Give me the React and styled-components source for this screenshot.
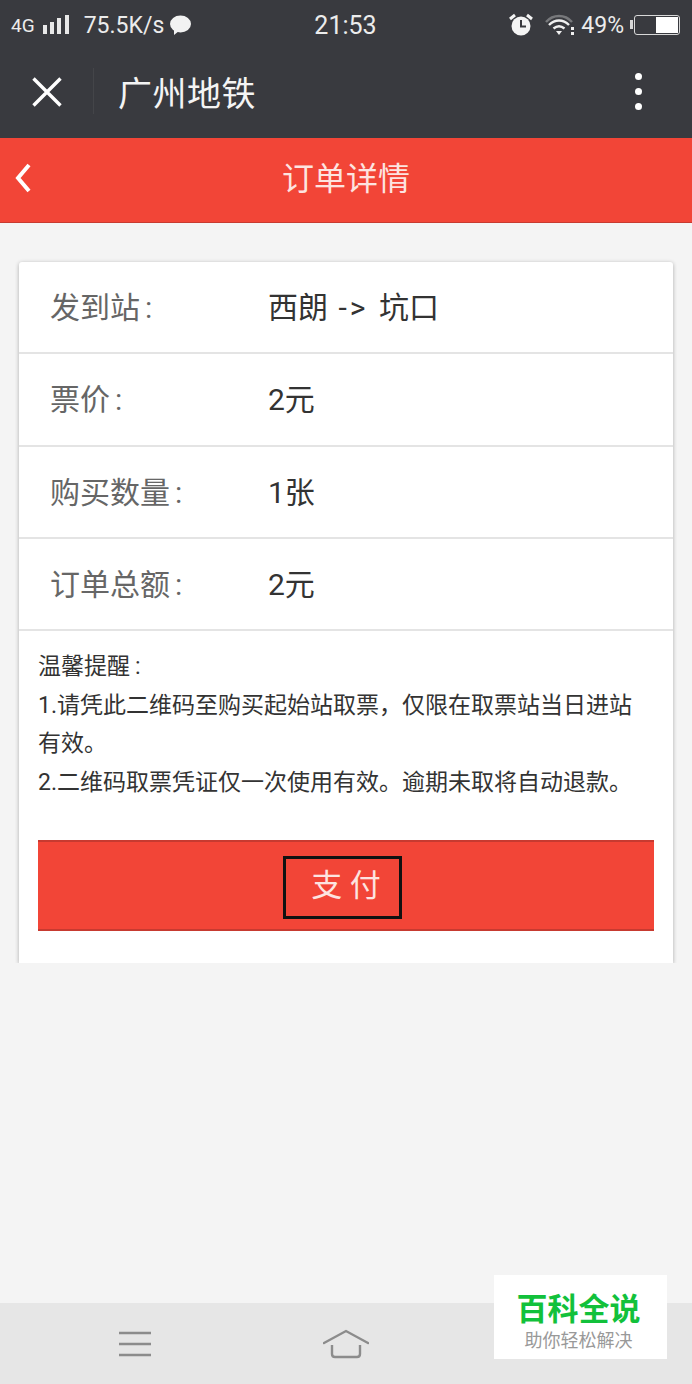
import styled, { createGlobalStyle } from 'styled-components';

const FONT = `"Roboto", "Noto Sans CJK SC", sans-serif`;

const App = () => {
    return(
        <>
            <GlobalStyle />
            <Page>
                <StatusBar>
                    <StatusLeft>
                        <SmallText>4G</SmallText>
                        <svg width="28" height="20" viewBox="0 0 28 20">
                            <rect x="1" y="10" width="4" height="9" fill="#e8e8e8" />
                            <rect x="8" y="7" width="4" height="12" fill="#e8e8e8" />
                            <rect x="15" y="3" width="4" height="16" fill="#e8e8e8" />
                            <rect x="23" y="0" width="4" height="19" fill="#e8e8e8" />
                        </svg>
                        <StatusText>75.5K/s</StatusText>
                        <svg width="24" height="21" viewBox="0 0 24 21">
                            <ellipse cx="12.5" cy="9" rx="10.5" ry="8.5" fill="#f2f2f2" />
                            <path d="M6 14 L6 20 L11 16 Z" fill="#f2f2f2" />
                        </svg>
                    </StatusLeft>
                    <Clock>21:53</Clock>
                    <StatusRight>
                        <svg width="26" height="24" viewBox="0 0 26 24">
                            <circle cx="13" cy="13" r="9.5" fill="#f4f4f4" />
                            <path d="M13 7 V13.5 H18" fill="none" stroke="#393a3f" strokeWidth="2" />
                            <path d="M2 6 L7 2 M24 6 L19 2" stroke="#f4f4f4" strokeWidth="3" />
                        </svg>
                        <WifiIcon width="30" height="22" viewBox="0 0 30 22">
                            <path d="M1 8 C8 0 20 0 27 8" fill="none" stroke="#77787b" strokeWidth="2.4" />
                            <path d="M4 11 C10 5 18 5 24 11" fill="none" stroke="#f0f0f0" strokeWidth="2.4" />
                            <path d="M8.5 14.5 C12 11.5 16 11.5 19.5 14.5" fill="none" stroke="#f0f0f0" strokeWidth="2.4" />
                            <path d="M11 17 H17 L14 21 Z" fill="#f0f0f0" />
                            <rect x="26" y="13" width="3" height="3" fill="#f0f0f0" />
                            <rect x="26" y="18" width="3" height="3" fill="#f0f0f0" />
                        </WifiIcon>
                        <BatteryText>49%</BatteryText>
                        <Battery><BatteryFill /></Battery>
                    </StatusRight>
                </StatusBar>

                <NavBar>
                    <CloseBtn>
                        <svg width="30" height="30" viewBox="0 0 30 30">
                            <path d="M1.5 1.5 L28.5 28.5 M28.5 1.5 L1.5 28.5" stroke="#fff" strokeWidth="3.4" />
                        </svg>
                    </CloseBtn>
                    <NavDivider />
                    <NavTitle>广州地铁</NavTitle>
                    <MoreDots><Dot /><Dot /><Dot /></MoreDots>
                </NavBar>

                <Header>
                    <BackIcon>
                        <svg width="18" height="30" viewBox="0 0 18 30">
                            <path d="M15 2 L4 15 L15 28" fill="none" stroke="#fff" strokeWidth="4" />
                        </svg>
                    </BackIcon>
                    订单详情
                </Header>

                <Content>
                    <Card>
                        <Row>
                            <RowLabel>发到站<Colon>:</Colon></RowLabel>
                            <RowValue>西朗 <Arrow>{'->'}</Arrow> 坑口</RowValue>
                        </Row>
                        <Row>
                            <RowLabel>票价<Colon>:</Colon></RowLabel>
                            <RowValue>2元</RowValue>
                        </Row>
                        <Row>
                            <RowLabel>购买数量<Colon>:</Colon></RowLabel>
                            <RowValue>1张</RowValue>
                        </Row>
                        <Row>
                            <RowLabel>订单总额<Colon>:</Colon></RowLabel>
                            <RowValue>2元</RowValue>
                        </Row>
                        <Notice>
                            <div>温馨提醒<Colon>:</Colon></div>
                            <div>{'1.请凭此二维码至购买起始站取票\uFF0C仅限在取票站当日进站有效。'}</div>
                            <div>2.二维码取票凭证仅一次使用有效。逾期未取将自动退款。</div>
                        </Notice>
                        <PayBar>
                            <PayButton>支 付</PayButton>
                        </PayBar>
                    </Card>
                </Content>

                <BottomBar>
                    <BottomIcon>
                        <svg width="34" height="26" viewBox="0 0 34 26">
                            <path d="M1 2 H33 M1 13 H33 M1 24 H33" stroke="#8c8c8c" strokeWidth="2.4" />
                        </svg>
                    </BottomIcon>
                    <HomeIcon>
                        <svg width="46" height="30" viewBox="0 0 46 30">
                            <path d="M1 14 L23 2 L45 14" fill="none" stroke="#8c8c8c" strokeWidth="2.4" strokeLinecap="round" />
                            <path d="M9 16 V25 Q9 28 12 28 H34 Q37 28 37 25 V16" fill="none" stroke="#8c8c8c" strokeWidth="2.4" />
                        </svg>
                    </HomeIcon>
                </BottomBar>

                <Watermark>
                    <WatermarkTitle>百科全说</WatermarkTitle>
                    <WatermarkSub>助你轻松解决</WatermarkSub>
                </Watermark>
            </Page>
        </>
    )
};

const GlobalStyle = createGlobalStyle`
    html, body {
        margin: 0;
        padding: 0;
        background: #f4f4f4;
        font-family: ${FONT};
    }
`;

const Page = styled.div`
    position: relative;
    width: 692px;
    height: 1384px;
    display: flex;
    flex-direction: column;
    overflow: hidden;
    background: #f4f4f4;
`;

const StatusBar = styled.div`
    height: 50px;
    flex-shrink: 0;
    display: grid;
    grid-template-columns: 1fr auto 1fr;
    align-items: center;
    padding: 0 12px 0 11px;
    box-sizing: border-box;
    background: #393a3f;
    color: #ececec;
`;

const StatusLeft = styled.div`
    display: flex;
    align-items: center;
    gap: 2px;
`;

const SmallText = styled.span`
    font-size: 19px;
    margin-right: 5px;
`;

const StatusText = styled.span`
    font-size: 23px;
    margin: 0 2px 0 12px;
`;

const Clock = styled.span`
    font-size: 25px;
`;

const StatusRight = styled.div`
    display: flex;
    align-items: center;
    justify-content: flex-end;
`;

const WifiIcon = styled.svg`
    margin-left: 11px;
`;

const BatteryText = styled.span`
    font-size: 23px;
    margin-left: 6px;
`;

const Battery = styled.div`
    width: 46px;
    height: 20px;
    margin-left: 10px;
    padding: 1px;
    display: flex;
    justify-content: flex-end;
    box-sizing: border-box;
    border: 1.5px solid #d8d8d8;
    border-radius: 3px;
    position: relative;

    &::before {
        content: '';
        position: absolute;
        left: -5px;
        top: 4px;
        width: 3px;
        height: 9px;
        background: #d8d8d8;
    }
`;

const BatteryFill = styled.div`
    width: 22px;
    background: #fff;
`;

const NavBar = styled.div`
    height: 88px;
    flex-shrink: 0;
    display: flex;
    align-items: center;
    box-sizing: border-box;
    padding-bottom: 6px;
    background: #393a3f;
`;

const CloseBtn = styled.div`
    width: 93px;
    margin-top: 2px;
    display: flex;
    justify-content: center;
`;

const NavDivider = styled.div`
    width: 1px;
    height: 46px;
    background: #444549;
`;

const NavTitle = styled.div`
    flex: 1;
    margin-left: 24px;
    font-size: 34px;
    letter-spacing: 0.5px;
    color: #f4f4f4;
`;

const MoreDots = styled.div`
    width: 108px;
    display: flex;
    flex-direction: column;
    align-items: center;
    gap: 8px;
`;

const Dot = styled.div`
    width: 7px;
    height: 7px;
    border-radius: 50%;
    background: #fff;
`;

const Header = styled.div`
    position: relative;
    height: 85px;
    flex-shrink: 0;
    display: flex;
    align-items: center;
    justify-content: center;
    box-sizing: border-box;
    padding-bottom: 8px;
    background: #f24537;
    border-bottom: 1px solid #c73a30;
    color: #fde4e0;
    font-size: 32px;
`;

const BackIcon = styled.div`
    position: absolute;
    left: 14px;
    top: 25px;
    line-height: 0;
`;

const Content = styled.div`
    flex: 1;
    padding: 39px 19px 0;
`;

const Card = styled.div`
    height: 701px;
    box-sizing: border-box;
    background: #fff;
    border-radius: 3px 3px 0 0;
    box-shadow: 0 1px 4px rgba(0,0,0,0.3);
    clip-path: inset(-4px -4px 0 -4px);
`;

const Row = styled.div`
    height: 92.3px;
    display: flex;
    align-items: center;
    box-sizing: border-box;
    padding: 0 0 4px 31px;
    border-bottom: 2px solid #e4e4e4;
    font-size: 30px;
`;

const RowLabel = styled.div`
    width: 218px;
    color: #666;
`;

const Colon = styled.span`
    margin-left: 5px;
`;

const RowValue = styled.div`
    color: #333;
    word-spacing: 3px;
`;

const Arrow = styled.span`
    letter-spacing: 3px;
`;

const Notice = styled.div`
    padding: 17px 30px 0 19px;
    font-size: 23px;
    line-height: 38.5px;
    color: #333;
`;

const PayBar = styled.div`
    height: 91px;
    margin: 38px 19px 0;
    display: flex;
    align-items: center;
    justify-content: center;
    box-sizing: border-box;
    background: #f24537;
    border-top: 2px solid #c73a30;
    border-bottom: 2px solid #c73a30;
`;

const PayButton = styled.div`
    width: 119px;
    height: 63px;
    margin: 4px 7px 0 0;
    padding: 0 0 10px 7px;
    display: flex;
    align-items: center;
    justify-content: center;
    box-sizing: border-box;
    border: 3px solid #111;
    color: #fde4e0;
    font-size: 31px;
`;

const BottomBar = styled.div`
    height: 81px;
    flex-shrink: 0;
    display: flex;
    align-items: center;
    background: #e6e6e6;
    padding-left: 118px;
`;

const BottomIcon = styled.div`
    line-height: 0;
`;

const HomeIcon = styled.div`
    margin-left: 171px;
    line-height: 0;
`;

const Watermark = styled.div`
    position: absolute;
    left: 494px;
    top: 1275px;
    width: 173px;
    height: 84px;
    padding: 17px 4px 0 0;
    box-sizing: border-box;
    display: flex;
    flex-direction: column;
    align-items: center;
    background: #fff;
`;

const WatermarkTitle = styled.div`
    font-size: 31px;
    line-height: 36px;
    font-weight: 700;
    color: #12c13b;
`;

const WatermarkSub = styled.div`
    font-size: 18px;
    line-height: 26px;
    color: #999;
`;

export default App;
